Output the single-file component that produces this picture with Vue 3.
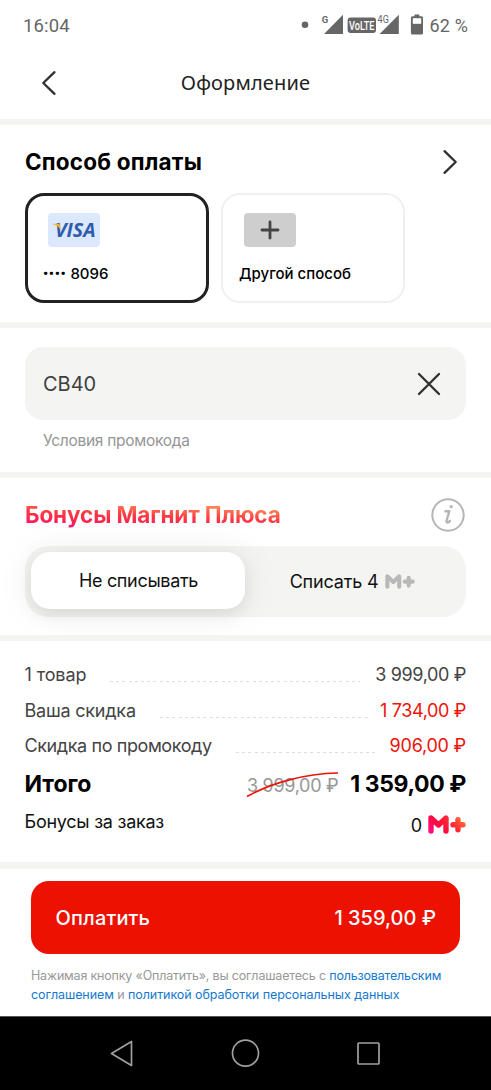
<script setup>
const totals = [
  { label: '1 товар', value: '3 999,00 ₽', red: false, k: 't1' },
  { label: 'Ваша скидка', value: '1 734,00 ₽', red: true, k: 't2' },
  { label: 'Скидка по промокоду', value: '906,00 ₽', red: true, k: 't3' },
]
</script>

<template>
  <div class="screen">
    <div class="status">
      <span class="time">16:04</span>
      <svg class="signals" width="126" height="24" viewBox="300 13 126 24">
        <circle cx="305" cy="24.7" r="3.3" fill="#666" />
        <text x="321.8" y="23.2" class="net bold">G</text>
        <path d="M324 34 L343 14.800 V34Z" fill="#666" />
        <rect x="347.600" y="17.500" width="28.400" height="15.500" rx="3" fill="#666" />
        <text transform="translate(349 30.200) scale(.68 1)" class="volte">VoLTE</text>
        <path d="M379.600 34 L398.800 14.800 V34Z" fill="#666" />
        <text transform="translate(377.600 23.200) scale(.86 1)" class="net halo">4G</text>
        <path d="M414.500 14.500h4.800v1.700h2.200a1.500 1.500 0 0 1 1.500 1.500v15.300a1.500 1.500 0 0 1-1.500 1.500h-9.100a1.500 1.500 0 0 1-1.500-1.500V17.700a1.500 1.500 0 0 1 1.500-1.500h2.100z" fill="#666" />
        <rect x="412.800" y="18.200" width="8.400" height="5.600" fill="#fff" />
      </svg>
      <span class="pct">62 %</span>
    </div>

    <header class="head">
      <svg class="back" width="16" height="26" viewBox="0 0 16 26"><path d="M13.500 2.200 L2.300 13 L13.500 23.800" class="ln" /></svg>
      <h1>Оформление</h1>
    </header>

    <section class="pay">
      <div class="pay-head">
        <h2>Способ оплаты</h2>
        <svg width="16" height="26" viewBox="0 0 16 26"><path d="M2.500 2.200 L13.700 13 L2.500 23.800" class="ln" /></svg>
      </div>
      <div class="cards">
        <div class="card active">
          <svg class="chip" width="52" height="34" viewBox="0 0 52 34">
            <rect width="52" height="34" rx="4" fill="#dbe8fe" />
            <text x="7" y="23.700" class="visa" textLength="40.500" lengthAdjust="spacingAndGlyphs">VISA</text>
            <path d="M4.800 10.700h5c1.300 0 1.800.500 2 1.500l.700 4.300c-1.400-2.700-4.100-4.600-7.700-5.300z" fill="#f9b21d" />
          </svg>
          <span class="card-name"><span class="dots">••••</span> 8096</span>
        </div>
        <div class="card">
          <svg class="chip" width="52" height="34" viewBox="0 0 52 34">
            <rect width="52" height="34" rx="4" fill="#cecece" />
            <path d="M26 9v16M18 17h16" stroke="#444" stroke-width="2.800" stroke-linecap="round" />
          </svg>
          <span class="card-name other">Другой способ</span>
        </div>
      </div>
    </section>

    <section class="promo">
      <div class="field">
        <span>СВ40</span>
        <svg width="24" height="24" viewBox="0 0 24 24"><path d="M2 2 L22 22 M22 2 L2 22" class="ln" /></svg>
      </div>
      <span class="terms">Условия промокода</span>
    </section>

    <section class="bonus">
      <div class="bonus-head">
        <h2 class="grad">Бонусы Магнит Плюса</h2>
        <svg width="34" height="34" viewBox="0 0 34 34" fill="none" stroke="#b5b5b5" stroke-width="2" stroke-linecap="round" stroke-linejoin="round">
          <circle cx="17" cy="17" r="15.700" />
          <path stroke-width="2.400" d="M14.500 13.200h3.800l-2.700 9.300c-.400 1.400.300 2.100 1.300 1.900.900-.200 1.600-.700 2-1.500" />
          <circle cx="20.200" cy="8.700" r="1.600" fill="#b5b5b5" stroke="none" />
        </svg>
      </div>
      <div class="toggle">
        <div class="opt on">Не списывать</div>
        <div class="opt off">
          <span>Списать 4</span>
          <svg width="30" height="15" viewBox="0 0 38 19" fill="none" stroke="#b8b8b8" stroke-width="5.200" stroke-linecap="round" stroke-linejoin="round">
            <path d="M3 16V3l7.500 7L18 3v13M25 9.700h10M30 4.700v10" />
          </svg>
        </div>
      </div>
    </section>

    <section class="sum">
      <div v-for="t in totals" :key="t.label" class="row" :class="t.k">
        <span class="lbl">{{ t.label }}</span>
        <i class="dash"></i>
        <span class="val" :class="{ red: t.red }">{{ t.value }}</span>
      </div>
      <div class="total">
        <b>Итого</b>
        <span class="old">3 999,00 ₽
          <svg width="93" height="27" viewBox="0 0 93 27"><path d="M1 25.500C24 12.500 58 2.500 92 2" fill="none" stroke="#ec1206" stroke-width="1.700" /></svg>
        </span>
        <b class="now">1 359,00 ₽</b>
      </div>
      <div class="earn">
        <span class="earn-l">Бонусы за заказ</span>
        <span class="zero">0</span>
        <svg width="38" height="19" viewBox="0 0 38 19" fill="none" stroke="url(#mg)" stroke-width="5.400" stroke-linecap="round" stroke-linejoin="round">
          <defs>
            <linearGradient id="mg" gradientUnits="userSpaceOnUse" x1="4" y1="21" x2="32" y2="-2">
              <stop offset="0" stop-color="#ff0f86" /><stop offset=".35" stop-color="#ff0a3c" /><stop offset=".65" stop-color="#ff2a38" /><stop offset="1" stop-color="#ff7a33" />
            </linearGradient>
          </defs>
          <path d="M3 16V3l7.500 7L18 3v13M25 9.700h10M30 4.700v10" />
        </svg>
      </div>
    </section>

    <footer class="foot">
      <button class="buy"><span class="b1">Оплатить</span><span>1 359,00 ₽</span></button>
      <p class="legal">
        <span class="l1">Нажимая кнопку «Оплатить», вы соглашаетесь с <a>пользовательским</a></span>
        <span class="l2"><a>соглашением</a> и <a>политикой обработки персональных данных</a></span>
      </p>
    </footer>

    <nav class="nav">
      <svg width="491" height="74" viewBox="0 1016 491 74" fill="none" stroke="#a0a0a0" stroke-width="1.700" stroke-linejoin="round">
        <path d="M131.500 1041.500v24L111.500 1053.500z" />
        <circle cx="245.500" cy="1053.200" r="13" />
        <rect x="358" y="1043" width="21" height="21" rx="1" />
      </svg>
    </nav>
  </div>
</template>

<style>
body { margin: 0; background: #fff; }
</style>
<style scoped>
.screen { width: 491px; height: 1090px; overflow: hidden; display: flex; flex-direction: column; background: #fff; font-family: Inter, "Noto Sans", sans-serif; color: #000; box-sizing: border-box; }
.screen * { box-sizing: border-box; }
h1, h2, p { margin: 0; }
svg { display: block; flex: none; }
.ln { fill: none; stroke: #303030; stroke-width: 2.3; stroke-linecap: round; stroke-linejoin: round; }
.status { height: 50px; padding: 0 23px 0 23px; display: flex; align-items: center; font-family: Roboto, sans-serif; color: #666; }
.time { font-size: 18.5px; width: 277px; letter-spacing: .15px; padding-top: 1px; }
.pct { font-size: 18px; margin-left: 4px; white-space: nowrap; letter-spacing: .15px; }
.net { font: 10.500px Roboto, sans-serif; fill: #666; }
.bold { font-weight: 700; font-size: 9.500px; }
.halo { paint-order: stroke; stroke: #fff; stroke-width: 1.500px; }
.volte { font: 500 13.500px Roboto, sans-serif; fill: #fff; }
.head { height: 75px; border-bottom: 6px solid #f4f4f2; display: flex; justify-content: center; position: relative; }
.back { position: absolute; left: 41px; top: 20px; }
h1 { font: 400 20px/66px "Noto Sans", sans-serif; letter-spacing: .15px; color: #222; }
.pay { height: 203px; border-bottom: 6px solid #f4f4f2; padding: 23px 25px 0; }
.pay-head { display: flex; justify-content: space-between; height: 28px; align-items: center; padding-right: 8px; }
h2 { font-size: 22.5px; font-weight: 700; line-height: 28px; letter-spacing: .2px; white-space: nowrap; }
.cards { display: flex; gap: 12px; margin-top: 17px; }
.card { width: 184px; height: 110px; border: 2px solid #f0f0f0; border-radius: 19px; padding: 18px 17px 0; }
.active { border: 3px solid #222; padding: 17px 16px 0; }
.chip { margin-left: 4px; }
.card-name { display: block; font-size: 15px; font-weight: 500; line-height: 20px; margin-top: 17px; white-space: nowrap; }
.active .card-name { margin-left: -1px; }
.other { margin-left: -1px; }
.dots { font-family: Roboto, sans-serif; letter-spacing: .6px; }
.visa { font: italic 700 19px "Open Sans", sans-serif; fill: #2f5cab; }
.promo { height: 150px; border-bottom: 6px solid #f4f4f2; padding: 19px 25px 0; }
.field { height: 73px; background: #f4f4f2; border-radius: 18px; display: flex; align-items: center; justify-content: space-between; padding: 0 25px 0 18px; font-size: 20px; color: #404040; }
.terms { display: block; margin: 11px 0 0 18px; font-size: 15.5px; line-height: 20px; letter-spacing: -.28px; color: #969696; }
.bonus { height: 163px; border-bottom: 6px solid #f4f4f2; padding: 20px 25px 0; overflow: hidden; }
.bonus-head { display: flex; align-items: center; justify-content: space-between; height: 34px; padding-right: 1px; }
.grad { letter-spacing: -.12px; background: linear-gradient(2.500deg, #ff1090 2%, #ff2250 26%, #ff3a42 48%, #ff9058 82%); -webkit-background-clip: text; background-clip: text; color: transparent; }
.toggle { margin-top: 14px; height: 71px; background: #f4f4f2; border-radius: 23px; display: flex; padding: 6px; font-size: 18px; width: 441px; }
.opt { display: flex; justify-content: center; align-items: center; white-space: nowrap; }
.on { width: 214px; height: 57px; background: #fff; border-radius: 19px; letter-spacing: -.32px; padding-left: 1px; color: #111; box-shadow: 0 6px 14px rgba(0,0,0,.06), 0 2px 36px rgba(0,0,0,.09); }
.off { flex: 1; gap: 7px; color: #111; letter-spacing: -.18px; }
.sum { height: 228px; border-bottom: 7px solid #f4f4f2; padding: 16px 25px 0 24.5px; }
.row { display: flex; height: 35.500px; line-height: 36px; font-size: 18px; color: #444; white-space: nowrap; }
.dash { flex: 1; height: 1px; margin: 24px 15px 0 24px; background: repeating-linear-gradient(90deg, #dedede 0 3px, transparent 3px 6.200px); }
.t2 .dash { margin-right: 12px; }
.t3 .dash { margin-right: 12px; }
.val { letter-spacing: -.36px; }
.t3 .val { letter-spacing: -.22px; }
.red { color: #f01209; }
.t1 .lbl { letter-spacing: -.1px; }
.t2 .lbl { letter-spacing: -.22px; }
.t3 .lbl { letter-spacing: -.4px; }
.total { display: flex; align-items: center; height: 40px; font-size: 23px; white-space: nowrap; }
.total b { font-weight: 700; letter-spacing: -.05px; }
.total b.now { letter-spacing: -.4px; margin-left: 12px; }
.old { position: relative; margin-left: auto; font-size: 18px; letter-spacing: -.3px; color: #969696; padding-top: 3px; }
.old svg { position: absolute; left: -1px; top: -1px; }
.earn { display: flex; align-items: center; height: 38px; font-size: 18px; color: #111; }
.earn-l { letter-spacing: -.25px; padding-bottom: 2px; margin-right: auto; }
.zero { padding-top: 6px; margin-right: 6px; }
.earn svg { margin-top: 4px; }
.foot { height: 147px; padding: 12px 31px 0; }
.buy { width: 429px; height: 73px; border: 0; border-radius: 18px; background: #ec1100; color: #fff; display: flex; align-items: center; justify-content: space-between; padding: 0 24px; font: 500 20px Inter, sans-serif; }
.b1 { letter-spacing: .15px; padding-left: .5px; }
.legal { margin-top: 12px; font-size: 12.5px; line-height: 19px; color: #989898; white-space: nowrap; }
.legal span { display: block; }
.legal a { color: #1478cf; }
.l1 { letter-spacing: -.18px; }
.l2 { letter-spacing: -.07px; }
.nav { height: 74px; background: #000; border-top: 1px solid #555; }
.nav svg { margin-top: -1px; }
</style>
